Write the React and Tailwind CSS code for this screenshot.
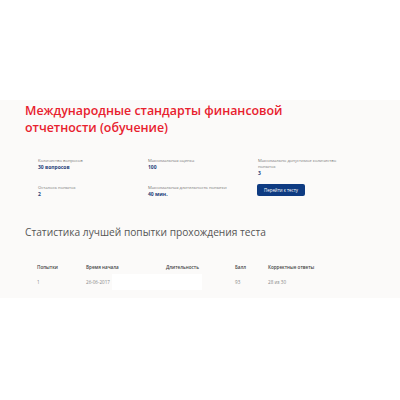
export default function App() {
  const info = [
    { label: "Количество вопросов", value: "30 вопросов" },
    { label: "Максимальная оценка", value: "100" },
    { label: "Максимально допустимое количество попыток", value: "3" },
    { label: "Осталось попыток", value: "2" },
    { label: "Максимальная длительность попытки", value: "40 мин." },
  ];

  return (
    <div className="w-[400px] h-[400px] bg-white font-['Open_Sans',sans-serif] overflow-hidden">
      <div className="h-[100px]" />
      <div className="bg-[#fbfaf9] h-[198px] pl-[25px] pt-[2px]">
        <h1 className="text-[#e8212e] text-[12.4px] leading-[17px] font-semibold w-[260px]">
          Международные стандарты финансовой отчетности (обучение)
        </h1>

        <div className="grid grid-cols-[110px_110px_110px] items-start ml-[13px] mt-[22px] gap-y-[9px]">
          {info.map((it) => (
            <div key={it.label}>
              <div className="text-[4.2px] leading-[6px] text-[#777] w-[80px]">{it.label}</div>
              <div className="text-[5px] leading-[6px] font-bold text-[#1f3f7a]">{it.value}</div>
            </div>
          ))}
          <div>
            <button className="block bg-[#0e3b82] text-white text-[4.4px] leading-[12px] h-[12px] w-[48px] rounded-[2px] -mt-[1px] -ml-[1px]">
              Перейти к тесту
            </button>
          </div>
        </div>

        <h2 className="text-[#555] text-[10.2px] leading-[14px] mt-[28px]">
          Статистика лучшей попытки прохождения теста
        </h2>

        <div className="ml-[12px] mt-[25px] text-[4.6px] leading-[6px]">
          <div className="flex font-semibold text-[#444]">
            <div className="w-[49px]">Попытки</div>
            <div className="w-[80px]">Время начала</div>
            <div className="w-[69px]">Длительность</div>
            <div className="w-[33px]">Балл</div>
            <div>Корректные ответы</div>
          </div>
          <div className="flex text-[#888] mt-[9px] items-center h-[6px]">
            <div className="w-[49px]">1</div>
            <div className="w-[80px] flex items-center whitespace-nowrap">
              26-06-2017
              <span className="bg-white w-[90px] h-[16px] ml-[2px] shrink-0" />
            </div>
            <div className="w-[69px]" />
            <div className="w-[33px]">93</div>
            <div>28 из 30</div>
          </div>
        </div>
      </div>
    </div>
  );
}
